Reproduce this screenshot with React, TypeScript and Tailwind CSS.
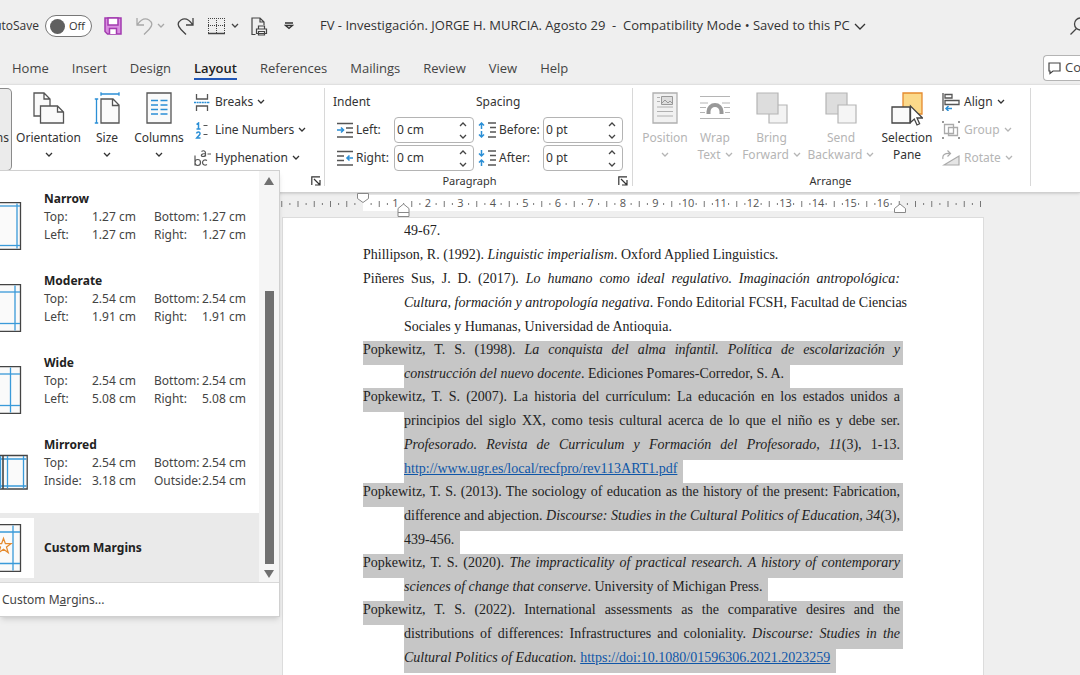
import type { ReactNode } from 'react';

const tabs = ['Home', 'Insert', 'Design', 'Layout', 'References', 'Mailings', 'Review', 'View', 'Help'];

const presets = [
  { name: 'Narrow', rows: [['Top:', '1.27 cm', 'Bottom:', '1.27 cm'], ['Left:', '1.27 cm', 'Right:', '1.27 cm']], x: [17], y: [4, 43.5] },
  { name: 'Moderate', rows: [['Top:', '2.54 cm', 'Bottom:', '2.54 cm'], ['Left:', '1.91 cm', 'Right:', '1.91 cm']], x: [15], y: [8, 39.5] },
  { name: 'Wide', rows: [['Top:', '2.54 cm', 'Bottom:', '2.54 cm'], ['Left:', '5.08 cm', 'Right:', '5.08 cm']], x: [10.5], y: [8, 39.5] },
  { name: 'Mirrored', rows: [['Top:', '2.54 cm', 'Bottom:', '2.54 cm'], ['Inside:', '3.18 cm', 'Outside:', '2.54 cm']], x: [], y: [] },
];

type Line = { text: ReactNode; full?: boolean };

const paragraphs: { selected: boolean; hanging?: boolean; lines: Line[] }[] = [
  { selected: false, hanging: true, lines: [{ text: '49-67.' }] },
  {
    selected: false,
    lines: [{ text: <>Phillipson, R. (1992). <i>Linguistic imperialism</i>. Oxford Applied Linguistics.</> }],
  },
  {
    selected: false,
    lines: [
      { full: true, text: <>Piñeres Sus, J. D. (2017). <i>Lo humano como ideal regulativo. Imaginación antropológica:</i></> },
      { full: true, text: <><i>Cultura, formación y antropología negativa</i>. Fondo Editorial FCSH, Facultad de Ciencias</> },
      { text: 'Sociales y Humanas, Universidad de Antioquia.' },
    ],
  },
  {
    selected: true,
    lines: [
      { full: true, text: <>Popkewitz, T. S. (1998). <i>La conquista del alma infantil. Política de escolarización y</i></> },
      { text: <><i>construcción del nuevo docente</i>. Ediciones Pomares-Corredor, S. A.</> },
    ],
  },
  {
    selected: true,
    lines: [
      { full: true, text: 'Popkewitz, T. S. (2007). La historia del currículum: La educación en los estados unidos a' },
      { full: true, text: 'principios del siglo XX, como tesis cultural acerca de lo que el niño es y debe ser.' },
      { full: true, text: <><i>Profesorado. Revista de Curriculum y Formación del Profesorado, 11</i>(3), 1-13.</> },
      { text: <DocLink href="http://www.ugr.es/local/recfpro/rev113ART1.pdf" /> },
    ],
  },
  {
    selected: true,
    lines: [
      { full: true, text: 'Popkewitz, T. S. (2013). The sociology of education as the history of the present: Fabrication,' },
      { full: true, text: <>difference and abjection. <i>Discourse: Studies in the Cultural Politics of Education, 34</i>(3),</> },
      { text: '439-456.' },
    ],
  },
  {
    selected: true,
    lines: [
      { full: true, text: <>Popkewitz, T. S. (2020). <i>The impracticality of practical research. A history of contemporary</i></> },
      { text: <><i>sciences of change that conserve</i>. University of Michigan Press.</> },
    ],
  },
  {
    selected: true,
    lines: [
      { full: true, text: 'Popkewitz, T. S. (2022). International assessments as the comparative desires and the' },
      { full: true, text: <>distributions of differences: Infrastructures and coloniality. <i>Discourse: Studies in the</i></> },
      { text: <><i>Cultural Politics of Education.</i> <DocLink href="https://doi:10.1080/01596306.2021.2023259" /></> },
    ],
  },
];

function DocLink({ href }: { href: string }) {
  return <a href={href} className="text-[#0f56a8] underline">{href}</a>;
}

function Chevron({ className = '' }: { className?: string }) {
  return (
    <svg width="8" height="6" viewBox="0 0 8 6" fill="none" stroke="currentColor" strokeWidth="1.3" className={`shrink-0 ${className}`}>
      <path d="M1 1l3 3 3-3" />
    </svg>
  );
}

function Launcher({ label }: { label: string }) {
  return (
    <button type="button" aria-label={label} className="shrink-0">
      <svg width="10" height="10" viewBox="0 0 10 10" fill="none" stroke="#333" strokeWidth="1.2">
        <path d="M9 .8H.8V9M3 3l5.5 5.5M9 4v5H4" />
      </svg>
    </button>
  );
}

function BigButton({ icon, label, second, disabled, menu = true, className }: {
  icon: ReactNode; label: string; second?: string; disabled?: boolean; menu?: boolean; className: string;
}) {
  return (
    <button
      type="button"
      disabled={disabled}
      className={`flex flex-col items-center shrink-0 pt-1 leading-[17px] ${disabled ? 'text-[#b5b5b5]' : 'text-[#333]'} ${className}`}
    >
      <span className="h-8 flex items-start justify-center">{icon}</span>
      <span className="mt-[5px] whitespace-nowrap">{label}</span>
      <span className="h-[17px] flex items-center gap-1">
        {second}
        {menu && <Chevron />}
      </span>
    </button>
  );
}

function SmallButton({ icon, label, disabled }: { icon: ReactNode; label: string; disabled?: boolean }) {
  return (
    <button type="button" disabled={disabled} className={`h-7 flex items-center gap-1 whitespace-nowrap ${disabled ? 'text-[#b5b5b5]' : 'text-[#333]'}`}>
      <span className="w-[18px] flex justify-center">{icon}</span>
      {label}
      <Chevron />
    </button>
  );
}

function Spinner({ id, label, value, icon, labelClass }: { id: string; label: string; value: string; icon: ReactNode; labelClass: string }) {
  return (
    <div className="h-7 flex items-center">
      {icon}
      <label htmlFor={id} className={`whitespace-nowrap ${labelClass}`}>{label}</label>
      <div className="w-20 h-[26px] flex items-center border border-[#b4b4b4] rounded-[4px] bg-white">
        <input id={id} defaultValue={value} className="w-full min-w-0 pl-0.5 bg-transparent outline-none text-[#333]" />
        <div className="flex flex-col gap-[7px] pr-1.5 text-[#444]">
          <button type="button" aria-label={`Increase ${label}`}><Chevron className="rotate-180" /></button>
          <button type="button" aria-label={`Decrease ${label}`}><Chevron /></button>
        </div>
      </div>
    </div>
  );
}

const OrientationIcon = () => (
  <svg width="32" height="32" viewBox="0 0 32 32" fill="#fafafa" stroke="#555" strokeWidth="1.3">
    <path d="M7 24H1V1h10l6 6v7M11 1v6h6" />
    <path d="M7.500 14h17l6 6v11h-23zM24.500 14v6h6" />
  </svg>
);

const SizeIcon = () => (
  <svg width="26" height="32" viewBox="0 0 26 32" fill="none" strokeWidth="1.3">
    <path d="M7 7h12l6 6v18H7zM18.500 7v6.500H25" fill="#fafafa" stroke="#555" />
    <path d="M7 2h18M7 .3v3.400M25 .3v3.400M2.500 7v24M.8 7h3.400M.8 31h3.400" stroke="#2b8fd6" />
  </svg>
);

const ColumnsIcon = () => (
  <svg width="26" height="32" viewBox="0 0 26 32" fill="none" strokeWidth="1.3">
    <path d="M1 1h24v30H1z" fill="#fafafa" stroke="#555" />
    <path d="M5 8.500h7M5 13h7M5 17.500h7M5 22h7M14.500 8.500h7M14.500 13h7M14.500 17.500h7M14.500 22h7" stroke="#2b8fd6" />
  </svg>
);

const BreaksIcon = () => (
  <svg width="16" height="17" viewBox="0 0 16 17" fill="none" strokeWidth="1.3">
    <path d="M2.500 0v5h11V0M2.500 17v-5h11v5" stroke="#555" />
    <path d="M0 8.500h16" stroke="#2b8fd6" strokeDasharray="2 .6" />
  </svg>
);

const LineNumbersIcon = () => (
  <svg width="16" height="17" viewBox="0 0 16 17" fill="none" strokeWidth="1.2">
    <path d="M2.500 2.500L4.500 1v6M2.500 7h4M2.500 11.500c.5-2 3.800-1.800 3.500.3-.2 1.200-2 2.500-3.300 4.200H6.500" stroke="#2b8fd6" strokeWidth="1.500" />
    <path d="M9.500 3.500h4M9.500 12.500h4" stroke="#555" />
  </svg>
);

const HyphenIcon = () => (
  <svg width="18" height="18" viewBox="0 0 18 18" fill="none" stroke="#555" strokeWidth="1.2">
    <path d="M2 6.500v10M2 13.500c0-4 5.500-4 5.500 0s-5.500 4-5.500 0" />
    <path d="M14 11.500c-2.500-1.500-4.500 0-4.500 2s2 3.500 4.500 2" />
    <path d="M8.500 2.500c2-1.500 4-.5 4 1.500v3.500M12.500 4.500c-5 0-5 3-2.500 3 1.500 0 2.500-1 2.500-2M14.500 5H18" />
  </svg>
);

const IndentIcon = ({ right }: { right?: boolean }) => (
  <svg width="16" height="16" viewBox="0 0 16 16" fill="none" strokeWidth="1.3">
    <path d={right ? 'M0 1.500h16M0 6h7M0 10.500h7M0 15h16' : 'M0 1.500h16M9 6h7M9 10.500h7M0 15h16'} stroke="#555" />
    <path d={right ? 'M16 8H10M12.500 5.500L10 8l2.500 2.500' : 'M0 8h6.500M4 5.500L6.500 8 4 10.500'} stroke="#2b8fd6" strokeWidth="1.6" />
  </svg>
);

const SpacingIcon = ({ after }: { after?: boolean }) => (
  <svg width="18" height="16" viewBox="0 0 18 16" fill="none" strokeWidth="1.3">
    <path d="M10 1h8M12 5.500h6M12 10h6M10 15h8" stroke="#555" />
    <path
      d={after ? 'M3.500 0v6M1 3.500L3.500 6 6 3.500M3.500 16v-6M1 12.500L3.500 10 6 12.500' : 'M3.500 7V1M1 3.500L3.500 1 6 3.500M3.500 9v6M1 12.500L3.500 15 6 12.500'}
      stroke="#2b8fd6"
      strokeWidth="1.5"
    />
  </svg>
);

const PositionIcon = () => (
  <svg width="26" height="32" viewBox="0 0 26 32" fill="none" stroke="#b0b0b0">
    <path d="M1 1h24v30H1z" fill="#f1f1f1" strokeWidth="1.3" />
    <path d="M5 5.500h3M5 9.500h3M5 15h16M5 19.500h16M5 24h16" />
    <path d="M9.500 4.500h11v8h-11z" fill="#ddd" stroke="#999" />
    <path d="M10 11l3-3 3 3 2-2 2 2" stroke="#999" />
  </svg>
);

const WrapIcon = () => (
  <svg width="32" height="32" viewBox="0 0 32 32" fill="none" stroke="#b5b5b5" strokeWidth="1.2">
    <path d="M1 4.500h30M1 11h8M23 11h8M1 15.500h6M25 15.500h6M1 20.500h5M26 20.500h5M1 26.500h30" />
    <path d="M9.500 22v-2.500a6.500 6.500 0 0 1 13 0V22" stroke="#999" strokeWidth="4" />
  </svg>
);

const ForwardIcon = () => (
  <svg width="32" height="32" viewBox="0 0 32 32" stroke="#b5b5b5" strokeWidth="1.2">
    <path d="M13 13h18v18H13z" fill="#f3f3f3" />
    <path d="M1 1h21v21H1z" fill="#ddd" />
  </svg>
);

const BackwardIcon = () => (
  <svg width="32" height="32" viewBox="0 0 32 32" stroke="#b5b5b5" strokeWidth="1.2">
    <path d="M1 1h21v21H1z" fill="#ddd" />
    <path d="M13 13h18v18H13z" fill="#f5f5f5" />
  </svg>
);

const SelectionIcon = () => (
  <svg width="32" height="34" viewBox="0 0 32 34" strokeWidth="1.3">
    <path d="M12 1h19v21H12z" fill="#fbd98a" stroke="#e58a2e" />
    <path d="M1 15h18v16H1z" fill="#fafafa" stroke="#444" />
    <path d="M19.500 14v16.500l3.800-3.500 2.700 6 2.600-1.200-2.600-5.800h5.500z" fill="#fff" stroke="#444" />
  </svg>
);

const AlignIcon = () => (
  <svg width="18" height="18" viewBox="0 0 18 18" fill="none" stroke="#555" strokeWidth="1.3">
    <path d="M1 0v18M3 1.500h7v3.500H3zM3 7.500h14v4H3z" />
    <path d="M10 15.500H4M6.500 13L4 15.500 6.500 18" stroke="#2b8fd6" strokeWidth="1.5" />
  </svg>
);

const GroupIcon = () => (
  <svg width="18" height="18" viewBox="0 0 18 18" fill="none" stroke="#aaa" strokeWidth="1.3">
    <path d="M2.500 3.500h9v9h-9zM6.500 6.500h9v8h-9z" />
    <path d="M0 1h2M16 1h2M0 17h2M16 17h2" stroke="#999" strokeWidth="2" />
  </svg>
);

const RotateIcon = () => (
  <svg width="18" height="16" viewBox="0 0 18 16" fill="none" stroke="#aaa" strokeWidth="1.2">
    <path d="M17 6v9H2z" fill="#e5e5e5" />
    <path d="M1 9C0 5 3 3 8 3.500M5.500 0.500l3 3-3 3" />
  </svg>
);

const UNIT = 32.5;

function Ruler() {
  const marks = [];
  for (let q = -10; q <= 76; q++) {
    const x = 82 + (q * UNIT) / 4;
    if (q === 0) continue;
    if (q % 4 === 0 && q > 0 && q <= 64) {
      marks.push(<text key={q} x={x} y="14" textAnchor="middle" fontSize="11" fill="#555">{q / 4}</text>);
    } else if (q % 2 === 0) {
      marks.push(<path key={q} d={`M${x} 8v6`} stroke="#777" />);
    } else {
      marks.push(<path key={q} d={`M${x} 10v2`} stroke="#777" />);
    }
  }
  return (
    <svg width="704" height="24" viewBox="0 0 704 24" className="block ml-[281px]">
      <path d="M82 2h537v16H82z" fill="#fff" />
      {marks}
      <g fill="#fff" stroke="#888">
        <path d="M76.500 .5h11v5L82 9.500l-5.500-4z" />
        <path d="M117 15.500l5.500-4.500 5.500 4.500v8h-11zM117 19.500h11" />
        <path d="M613.500 15.500L619 11l5.500 4.500v4h-11z" />
      </g>
    </svg>
  );
}

function MarginThumb({ x, y }: { x: number[]; y: number[] }) {
  return (
    <svg width="34" height="48" viewBox="0 0 34 48" fill="none" strokeWidth="1.3">
      <path d="M-10 .7h30.500v46.600H-10z" fill="#fafafa" stroke="#444" />
      {x.map((v) => <path key={v} d={`M${v} 1.500v45`} stroke="#3a9ad9" />)}
      {y.map((v) => <path key={v} d={`M0 ${v}h20`} stroke="#3a9ad9" />)}
    </svg>
  );
}

function MirroredThumb() {
  return (
    <svg width="34" height="48" viewBox="0 0 34 48" fill="none" strokeWidth="1.3">
      <path d="M-10 7.500h37.200v33.500H-10z" fill="#fafafa" stroke="#444" />
      <path d="M0 11h26.500M0 38h26.500M7.500 8v32.500M23.500 8v32.500M.5 8v32.500" stroke="#3a9ad9" />
      <path d="M3 8v33" stroke="#444" strokeWidth="1.600" />
    </svg>
  );
}

function MarginsMenu() {
  return (
    <div className="absolute top-[170px] left-0 w-[280px] bg-white border border-l-0 border-[#d0d0d0] shadow-md z-10 font-['Noto_Sans',sans-serif] text-[12px] text-[#444]">
      <div className="flex">
        <div className="flex-1">
          {presets.map((p) => (
            <button type="button" key={p.name} className="w-full h-[82px] pt-[19px] flex text-left leading-[18px]">
              <span className="w-11 shrink-0 pt-3">
                {p.name === 'Mirrored' ? <MirroredThumb /> : <MarginThumb x={p.x} y={p.y} />}
              </span>
              <span className="flex flex-col">
                <b className="font-bold text-[#222]">{p.name}</b>
                {p.rows.map(([a, b, c, d]) => (
                  <span key={a} className="grid grid-cols-[48px_62px_48px_46px] whitespace-nowrap">
                    <span>{a}</span>
                    <span>{b}</span>
                    <span>{c}</span>
                    <span>{d}</span>
                  </span>
                ))}
              </span>
            </button>
          ))}
          <button type="button" className="w-full h-[69px] mt-[14px] flex items-center bg-[#eaeaea] text-left">
            <span className="w-[34px] h-[60px] mr-2.5 flex items-center bg-white">
              <svg width="34" height="48" viewBox="0 0 34 48" fill="none" strokeWidth="1.3">
                <path d="M-10 .7h30.500v46.600H-10z" fill="#fafafa" stroke="#444" />
                <path d="M13 1.500v45M0 8h20M0 39.500h20" stroke="#3a9ad9" />
                <path d="M3.500 14.500l1.900 5.200h5.600l-4.500 3.400 1.700 5.500-4.700-3.300-4.700 3.300 1.700-5.500-4.500-3.400h5.600z" stroke="#e58a2e" />
              </svg>
            </span>
            <b className="font-bold text-[#222]">Custom Margins</b>
          </button>
        </div>
        <div className="w-5 flex flex-col items-center bg-[#f5f5f5] pt-1.5 pb-1">
          <svg width="10" height="8" viewBox="0 0 10 8" fill="#707070"><path d="M5 0l5 8H0z" /></svg>
          <div className="flex-1" />
          <div className="w-[9px] h-[273px] bg-[#707070]" />
          <svg width="10" height="8" viewBox="0 0 10 8" fill="#707070" className="mt-1.5"><path d="M0 0h10L5 8z" /></svg>
        </div>
      </div>
      <button type="button" className="w-full h-[34px] pl-0.5 border-t border-[#d8d8d8] text-left">
        Custom M<u>a</u>rgins...
      </button>
    </div>
  );
}

function TitleBar() {
  return (
    <div className="h-[52px] flex items-center text-[#333] overflow-hidden">
      <div className="w-[39px] shrink-0 flex justify-end text-[12px]">
        <label htmlFor="autosave">AutoSave</label>
      </div>
      <label className="ml-1.5 w-[47px] h-[22px] shrink-0 pl-1 flex items-center gap-1 rounded-full border border-[#777] bg-white text-[11px]">
        <input id="autosave" type="checkbox" className="peer sr-only" />
        <span className="w-[15px] h-[15px] rounded-full bg-[#606060]" />
        Off
      </label>
      <button type="button" aria-label="Save" className="ml-3">
        <svg width="18" height="18" viewBox="0 0 18 18" fill="none" stroke="#a33bb0" strokeWidth="1.500">
          <path d="M1 1h16v16H3.500L1 14.500z" fill="#d98ee0" />
          <path d="M4 1h10v7H4zM5.500 17v-5.500h7V17" fill="#fff" />
        </svg>
      </button>
      <button type="button" aria-label="Undo" disabled className="ml-3.5 flex items-center gap-1 text-[#a8a8a8]">
        <svg width="17" height="18" viewBox="0 0 17 18" fill="none" stroke="currentColor" strokeWidth="1.300">
          <path d="M1 1v7h7M1.500 7.500C5 2.500 9 .5 13 3s3.500 6 0 9.500L8 17.500" />
        </svg>
        <Chevron />
      </button>
      <button type="button" aria-label="Redo" className="ml-3 text-[#444]">
        <svg width="17" height="18" viewBox="0 0 17 18" fill="none" stroke="currentColor" strokeWidth="1.300">
          <path d="M16 1v7H9M15.500 7.500C12 2.500 8 .5 4 3s-3.500 6 0 9.500L9 17.500" />
        </svg>
      </button>
      <button type="button" aria-label="Borders" className="ml-3.5 flex items-center gap-1.5 text-[#444]">
        <svg width="17" height="18" viewBox="0 0 17 18" fill="none" stroke="currentColor">
          <path d="M.5 1v15M16.500 1v15M8.500 1v15M0 1.500h17M0 8.500h17" strokeDasharray="1 1" />
          <path d="M0 16.500h17" strokeWidth="1.500" />
        </svg>
        <Chevron />
      </button>
      <button type="button" aria-label="Print preview" className="ml-3">
        <svg width="17" height="19" viewBox="0 0 17 19" fill="none" stroke="#444" strokeWidth="1.200">
          <path d="M4.500 17.500H1V1h8l4 4v3M9 1v4h4" />
          <path d="M7.500 12V9h6v3M5.500 12h10v4.500h-10zM7.500 14.500h6V18h-6z" />
        </svg>
      </button>
      <button type="button" aria-label="Customize toolbar" className="ml-4">
        <svg width="10" height="8" viewBox="0 0 10 8" fill="none" stroke="#333" strokeWidth="1.300">
          <path d="M1 1h8M1.500 3.500L5 6.500l3.500-3z" />
        </svg>
      </button>
      <button type="button" className="ml-[26px] flex items-center gap-1 whitespace-nowrap text-[13px]">
        <span className="whitespace-pre">FV - Investigación. JORGE H. MURCIA. Agosto 29  -  Compatibility Mode • Saved to this PC</span>
        <svg width="12" height="7" viewBox="0 0 12 7" fill="none" stroke="#333" strokeWidth="1.300"><path d="M1 1l5 5 5-5" /></svg>
      </button>
      <div className="flex-1" />
      <button type="button" aria-label="Search" className="w-2.5 shrink-0 overflow-hidden">
        <svg width="18" height="18" viewBox="0 0 18 18" fill="none" stroke="#444" strokeWidth="1.300">
          <circle cx="10.500" cy="7" r="6" /><path d="M6.500 11.500L.5 17.500" />
        </svg>
      </button>
    </div>
  );
}

export default function App() {
  return (
    <div className="relative h-screen overflow-hidden bg-[#efefef] font-['Open_Sans',sans-serif] text-[13px]">
      <header>
        <TitleBar />
        <nav className="h-8 pl-3 flex items-start gap-[23px] text-[#444]">
          {tabs.map((t) => (
            <button
              type="button"
              key={t}
              className={`h-7 pt-[7px] leading-[19px] border-b-2 ${t === 'Layout' ? 'border-[#1f55b5] font-semibold text-[#222]' : 'border-transparent'}`}
            >
              {t}
            </button>
          ))}
          <div className="flex-1" />
          <button type="button" className="w-[37px] h-[26px] mt-[3px] shrink-0 pl-1 flex items-center gap-1 overflow-hidden bg-white border border-r-0 border-[#b4b4b4] rounded-l-[4px]">
            <svg width="13" height="13" viewBox="0 0 13 13" fill="none" stroke="#444" strokeWidth="1.200" className="shrink-0">
              <path d="M1 1h11v8H5l-3 2.500V9H1z" />
            </svg>
            Comments
          </button>
        </nav>
      </header>

      <section className="h-[109px] flex bg-white border-t border-[#e0e0e0] border-b border-b-[#d0d0d0] shadow-sm pt-[3px] font-['Noto_Sans',sans-serif] text-[12px] text-[#333]">
        <button type="button" className="w-3 h-[83px] shrink-0 flex justify-end items-center pt-4 pr-0.5 overflow-hidden rounded-r-[5px] border border-l-0 border-[#8a8a8a] bg-[#ebebeb]">
          Margins
        </button>
        <BigButton icon={<OrientationIcon />} label="Orientation" className="w-[73px]" />
        <BigButton icon={<SizeIcon />} label="Size" className="w-11" />
        <BigButton icon={<ColumnsIcon />} label="Columns" className="w-[60px]" />
        <div className="ml-1 flex">
          <div className="w-[118px]">
            <SmallButton icon={<BreaksIcon />} label="Breaks" />
            <SmallButton icon={<LineNumbersIcon />} label="Line Numbers" />
            <SmallButton icon={<HyphenIcon />} label="Hyphenation" />
          </div>
          <div className="h-[98px] flex items-end"><Launcher label="Page setup" /></div>
        </div>
        <div className="ml-[3px] h-[98px] border-l border-[#d8d8d8]" />

        <div className="w-[307px] shrink-0 pl-2 pr-1 flex flex-col">
          <div className="h-7 flex items-center">
            <span className="w-[143px]">Indent</span>
            <span>Spacing</span>
          </div>
          <div className="flex gap-1 pl-1">
            <div>
              <Spinner id="left" label="Left:" value="0 cm" icon={<IndentIcon />} labelClass="pl-[3px] w-[41px]" />
              <Spinner id="right" label="Right:" value="0 cm" icon={<IndentIcon right />} labelClass="pl-[3px] w-[41px]" />
            </div>
            <div>
              <Spinner id="before" label="Before:" value="0 pt" icon={<SpacingIcon />} labelClass="pl-[3px] w-[47px]" />
              <Spinner id="after" label="After:" value="0 pt" icon={<SpacingIcon after />} labelClass="pl-[3px] w-[47px]" />
            </div>
          </div>
          <div className="flex items-center text-[11px] leading-[18px]">
            <span className="flex-1 pr-3 text-center">Paragraph</span>
            <Launcher label="Paragraph settings" />
          </div>
        </div>
        <div className="h-[98px] border-l border-[#d8d8d8]" />

        <div className="w-[397px] shrink-0 pl-1 pr-1.5 flex flex-col">
          <div className="h-[84px] flex">
            <BigButton icon={<PositionIcon />} label="Position" disabled className="w-14" />
            <BigButton icon={<WrapIcon />} label="Wrap" second="Text" disabled className="w-11" />
            <BigButton icon={<ForwardIcon />} label="Bring" second="Forward" disabled className="w-[69px]" />
            <BigButton icon={<BackwardIcon />} label="Send" second="Backward" disabled className="w-[70px]" />
            <BigButton icon={<SelectionIcon />} label="Selection" second="Pane" menu={false} className="w-[62px]" />
            <div className="ml-1">
              <SmallButton icon={<AlignIcon />} label="Align" />
              <SmallButton icon={<GroupIcon />} label="Group" disabled />
              <SmallButton icon={<RotateIcon />} label="Rotate" disabled />
            </div>
          </div>
          <span className="text-center text-[11px] leading-[18px]">Arrange</span>
        </div>
        <div className="h-[98px] border-l border-[#d8d8d8]" />
      </section>

      <Ruler />

      <main className="ml-[282px] w-[702px] h-[480px] pt-1 px-20 bg-white border border-[#dcdcdc] font-['Liberation_Serif',serif] text-[14px] leading-[18px] text-[#222]">
        {paragraphs.map((p, i) => (
          <div key={i} className={p.selected ? '-mt-px' : ''}>
            {p.lines.map((l, j) => (
              <p
                key={j}
                className={`h-6 whitespace-nowrap ${j > 0 || p.hanging ? 'ml-[41px]' : ''} ${l.full ? 'pr-[3px] [text-align-last:justify]' : 'w-fit pr-1.5'} ${p.selected ? 'bg-[#c6c6c6]' : ''}`}
              >
                {l.text}
              </p>
            ))}
          </div>
        ))}
      </main>

      <MarginsMenu />
    </div>
  );
}
